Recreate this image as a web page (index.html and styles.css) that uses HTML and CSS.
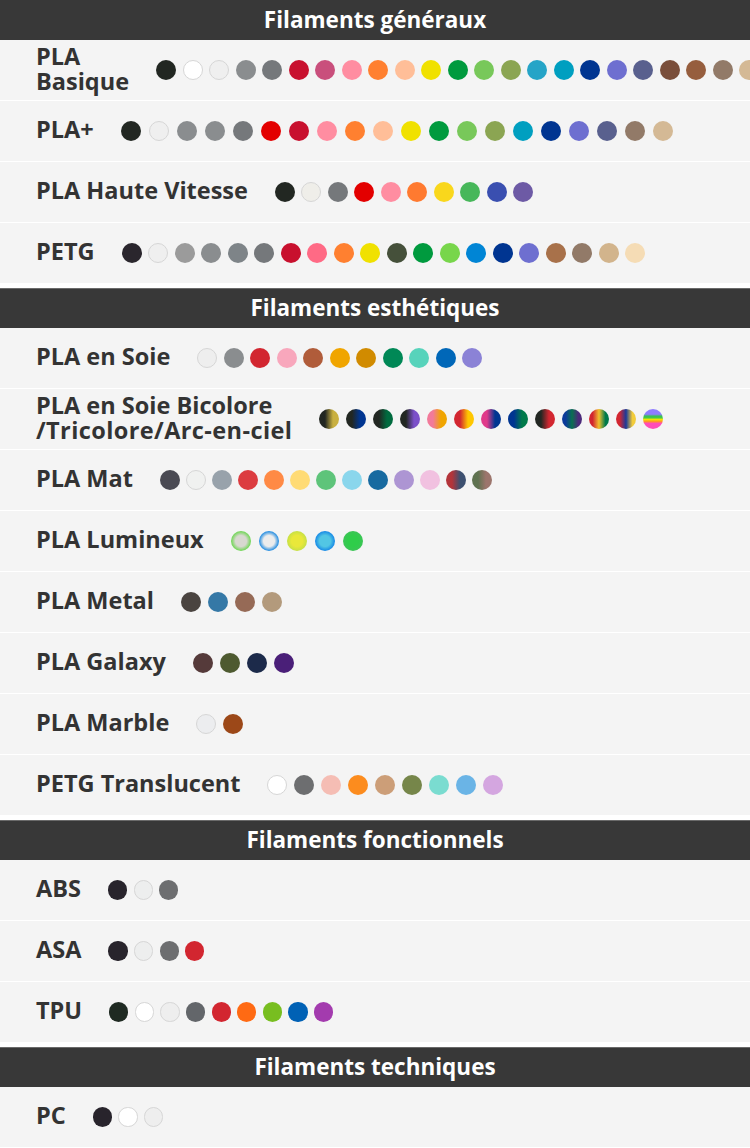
FILE: index.html
```html
<!DOCTYPE html>
<html lang="fr">
<head>
<meta charset="utf-8">
<title>Filaments</title>
<link rel="stylesheet" href="styles.css">
</head>
<body>
<section class="group">
  <h2 class="group-title">Filaments généraux</h2>
  <div class="rows">
    <div class="row">
      <div class="label"><span class="line">PLA</span><span class="line">Basique</span></div>
      <div class="swatches">
        <span class="sw" style="--c:#222722"></span>
        <span class="sw light" style="--c:#ffffff"></span>
        <span class="sw light" style="--c:#efefef"></span>
        <span class="sw" style="--c:#8a8d8f"></span>
        <span class="sw" style="--c:#75787b"></span>
        <span class="sw" style="--c:#c8102e"></span>
        <span class="sw" style="--c:#c94f7c"></span>
        <span class="sw" style="--c:#ff8da1"></span>
        <span class="sw" style="--c:#ff8030"></span>
        <span class="sw" style="--c:#ffbe98"></span>
        <span class="sw" style="--c:#f0e100"></span>
        <span class="sw" style="--c:#009a3e"></span>
        <span class="sw" style="--c:#78c85a"></span>
        <span class="sw" style="--c:#8ba552"></span>
        <span class="sw" style="--c:#25a4c7"></span>
        <span class="sw" style="--c:#009fc0"></span>
        <span class="sw" style="--c:#003591"></span>
        <span class="sw" style="--c:#6e6fd0"></span>
        <span class="sw" style="--c:#59608e"></span>
        <span class="sw" style="--c:#7a4e3a"></span>
        <span class="sw" style="--c:#965e3e"></span>
        <span class="sw" style="--c:#927a68"></span>
        <span class="sw" style="--c:#d4b995"></span>
      </div>
    </div>
    <div class="row">
      <div class="label">PLA+</div>
      <div class="swatches wider">
        <span class="sw" style="--c:#222722"></span>
        <span class="sw light" style="--c:#efefef"></span>
        <span class="sw" style="--c:#8a8d8f"></span>
        <span class="sw" style="--c:#8a8d8f"></span>
        <span class="sw" style="--c:#75787b"></span>
        <span class="sw" style="--c:#e30000"></span>
        <span class="sw" style="--c:#c8102e"></span>
        <span class="sw" style="--c:#ff8da1"></span>
        <span class="sw" style="--c:#ff8030"></span>
        <span class="sw" style="--c:#ffbe98"></span>
        <span class="sw" style="--c:#f0e100"></span>
        <span class="sw" style="--c:#009a3e"></span>
        <span class="sw" style="--c:#78c85a"></span>
        <span class="sw" style="--c:#8ba552"></span>
        <span class="sw" style="--c:#009fc0"></span>
        <span class="sw" style="--c:#003591"></span>
        <span class="sw" style="--c:#6e6fd0"></span>
        <span class="sw" style="--c:#59608e"></span>
        <span class="sw" style="--c:#927a68"></span>
        <span class="sw" style="--c:#d4b995"></span>
      </div>
    </div>
    <div class="row">
      <div class="label">PLA Haute Vitesse</div>
      <div class="swatches">
        <span class="sw" style="--c:#222722"></span>
        <span class="sw light" style="--c:#efeee9"></span>
        <span class="sw" style="--c:#75787b"></span>
        <span class="sw" style="--c:#e30000"></span>
        <span class="sw" style="--c:#ff8da1"></span>
        <span class="sw" style="--c:#ff7a30"></span>
        <span class="sw" style="--c:#f9d71c"></span>
        <span class="sw" style="--c:#47b75a"></span>
        <span class="sw" style="--c:#3a4fb0"></span>
        <span class="sw" style="--c:#6d5aa5"></span>
      </div>
    </div>
    <div class="row">
      <div class="label">PETG</div>
      <div class="swatches">
        <span class="sw" style="--c:#2a262d"></span>
        <span class="sw light" style="--c:#efefef"></span>
        <span class="sw" style="--c:#9b9b9b"></span>
        <span class="sw" style="--c:#8a8d8f"></span>
        <span class="sw" style="--c:#7e8488"></span>
        <span class="sw" style="--c:#75787b"></span>
        <span class="sw" style="--c:#c8102e"></span>
        <span class="sw" style="--c:#ff6a85"></span>
        <span class="sw" style="--c:#ff8030"></span>
        <span class="sw" style="--c:#f0e100"></span>
        <span class="sw" style="--c:#45503a"></span>
        <span class="sw" style="--c:#009a3e"></span>
        <span class="sw" style="--c:#78d64b"></span>
        <span class="sw" style="--c:#0085d5"></span>
        <span class="sw" style="--c:#003591"></span>
        <span class="sw" style="--c:#6e6fd0"></span>
        <span class="sw" style="--c:#a8714a"></span>
        <span class="sw" style="--c:#927a68"></span>
        <span class="sw" style="--c:#d2b48c"></span>
        <span class="sw" style="--c:#f5dcb5"></span>
      </div>
    </div>
  </div>
</section>

<section class="group">
  <h2 class="group-title">Filaments esthétiques</h2>
  <div class="rows">
    <div class="row">
      <div class="label">PLA en Soie</div>
      <div class="swatches">
        <span class="sw light" style="--c:#eeeeee"></span>
        <span class="sw" style="--c:#8a8d8f"></span>
        <span class="sw" style="--c:#d22630"></span>
        <span class="sw" style="--c:#f8a7bc"></span>
        <span class="sw" style="--c:#b05c3a"></span>
        <span class="sw" style="--c:#f0a500"></span>
        <span class="sw" style="--c:#d18b00"></span>
        <span class="sw" style="--c:#008856"></span>
        <span class="sw" style="--c:#57d3bb"></span>
        <span class="sw" style="--c:#0067b8"></span>
        <span class="sw" style="--c:#8b82d6"></span>
      </div>
    </div>
    <div class="row">
      <div class="label"><span class="line">PLA en Soie Bicolore</span><span class="line spaced">/Tricolore/Arc-en-ciel</span></div>
      <div class="swatches wide">
        <span class="sw duo" style="--a:#222722;--b:#c9b040"></span>
        <span class="sw duo" style="--a:#222722;--b:#003591"></span>
        <span class="sw duo" style="--a:#222722;--b:#006b3f"></span>
        <span class="sw duo" style="--a:#222722;--b:#7b4fc9"></span>
        <span class="sw duo" style="--a:#f27a9a;--b:#f0a500"></span>
        <span class="sw duo" style="--a:#d22630;--b:#ffc700"></span>
        <span class="sw duo" style="--a:#e03a8a;--b:#003591"></span>
        <span class="sw duo" style="--a:#003591;--b:#007a4a"></span>
        <span class="sw duo" style="--a:#222722;--b:#d22630"></span>
        <span class="sw trio" style="--a:#0a3a9a;--b:#0a7050;--c:#4b2a7a"></span>
        <span class="sw trio" style="--a:#d22630;--b:#f2c12e;--c:#007a4a"></span>
        <span class="sw trio" style="--a:#d22630;--b:#1a3a9a;--c:#f2cc3a"></span>
        <span class="sw rainbow"></span>
      </div>
    </div>
    <div class="row">
      <div class="label">PLA Mat</div>
      <div class="swatches tight-mat">
        <span class="sw" style="--c:#4a4a53"></span>
        <span class="sw light" style="--c:#f0f1f0"></span>
        <span class="sw" style="--c:#98a2ab"></span>
        <span class="sw" style="--c:#dc3c40"></span>
        <span class="sw" style="--c:#ff8a45"></span>
        <span class="sw" style="--c:#ffdb75"></span>
        <span class="sw" style="--c:#5ec47a"></span>
        <span class="sw" style="--c:#8ad6ec"></span>
        <span class="sw" style="--c:#176aa0"></span>
        <span class="sw" style="--c:#ad95d3"></span>
        <span class="sw" style="--c:#f1c1e0"></span>
        <span class="sw duo" style="--a:#b3343a;--b:#3d5070"></span>
        <span class="sw duo" style="--a:#5f7250;--b:#9c756c"></span>
      </div>
    </div>
    <div class="row">
      <div class="label">PLA Lumineux</div>
      <div class="swatches wider">
        <span class="sw glow" style="--a:#d8d8d0;--b:#6cd650"></span>
        <span class="sw glow" style="--a:#ececec;--b:#1a88e0"></span>
        <span class="sw glow" style="--a:#e9e83a;--b:#c6e046"></span>
        <span class="sw glow" style="--a:#52c6e4;--b:#1588e6"></span>
        <span class="sw glow" style="--a:#2fcd4a;--b:#3cc456"></span>
      </div>
    </div>
    <div class="row">
      <div class="label">PLA Metal</div>
      <div class="swatches wide">
        <span class="sw" style="--c:#4a4440"></span>
        <span class="sw" style="--c:#3578a6"></span>
        <span class="sw" style="--c:#966a56"></span>
        <span class="sw" style="--c:#b39a7c"></span>
      </div>
    </div>
    <div class="row">
      <div class="label">PLA Galaxy</div>
      <div class="swatches wide">
        <span class="sw" style="--c:#553a3a"></span>
        <span class="sw" style="--c:#4e5a30"></span>
        <span class="sw" style="--c:#1c2a4a"></span>
        <span class="sw" style="--c:#4a1f78"></span>
      </div>
    </div>
    <div class="row">
      <div class="label">PLA Marble</div>
      <div class="swatches wide">
        <span class="sw light" style="--c:#ecedef"></span>
        <span class="sw" style="--c:#9c4818"></span>
      </div>
    </div>
    <div class="row">
      <div class="label">PETG Translucent</div>
      <div class="swatches wide">
        <span class="sw light" style="--c:#ffffff"></span>
        <span class="sw" style="--c:#6d6e70"></span>
        <span class="sw" style="--c:#f5bdb4"></span>
        <span class="sw" style="--c:#fc8c1e"></span>
        <span class="sw" style="--c:#cc9e78"></span>
        <span class="sw" style="--c:#76864a"></span>
        <span class="sw" style="--c:#7adcd0"></span>
        <span class="sw" style="--c:#6ab4e6"></span>
        <span class="sw" style="--c:#d4a6e0"></span>
      </div>
    </div>
  </div>
</section>

<section class="group">
  <h2 class="group-title">Filaments fonctionnels</h2>
  <div class="rows">
    <div class="row">
      <div class="label">ABS</div>
      <div class="swatches tight">
        <span class="sw" style="--c:#28242c"></span>
        <span class="sw light" style="--c:#edeeee"></span>
        <span class="sw" style="--c:#6d6e70"></span>
      </div>
    </div>
    <div class="row">
      <div class="label">ASA</div>
      <div class="swatches tight">
        <span class="sw" style="--c:#28242c"></span>
        <span class="sw light" style="--c:#edeeee"></span>
        <span class="sw" style="--c:#6d6e70"></span>
        <span class="sw" style="--c:#d22630"></span>
      </div>
    </div>
    <div class="row">
      <div class="label">TPU</div>
      <div class="swatches tight">
        <span class="sw" style="--c:#1f2a22"></span>
        <span class="sw light" style="--c:#ffffff"></span>
        <span class="sw light" style="--c:#eeeeee"></span>
        <span class="sw" style="--c:#63666a"></span>
        <span class="sw" style="--c:#d22630"></span>
        <span class="sw" style="--c:#ff6a13"></span>
        <span class="sw" style="--c:#78be20"></span>
        <span class="sw" style="--c:#0061b5"></span>
        <span class="sw" style="--c:#a33bae"></span>
      </div>
    </div>
  </div>
</section>

<section class="group">
  <h2 class="group-title">Filaments techniques</h2>
  <div class="rows">
    <div class="row">
      <div class="label">PC</div>
      <div class="swatches tight">
        <span class="sw" style="--c:#28242c"></span>
        <span class="sw light" style="--c:#ffffff"></span>
        <span class="sw light" style="--c:#eeeeee"></span>
      </div>
    </div>
  </div>
</section>
</body>
</html>
```

FILE: styles.css
```css
html, body {
  margin: 0;
  padding: 0;
  background: #ffffff;
  overflow-x: hidden;
}

body {
  width: 750px;
  font-family: "Open Sans", "Noto Sans", sans-serif;
}

.group + .group {
  margin-top: 5px;
}

.group-title {
  margin: 0;
  height: 40px;
  box-sizing: border-box;
  background: #383838;
  color: #ffffff;
  font-size: 22.5px;
  font-weight: 700;
  line-height: 1;
  display: flex;
  align-items: center;
  justify-content: center;
}

.group + .group .group-title {
  border-top: 1px solid #6a6a6a;
}

.rows {
  display: flex;
  flex-direction: column;
  gap: 1px;
}

.row {
  height: 60px;
  background: #f4f4f4;
  display: flex;
  align-items: center;
  gap: 27px;
  padding-left: 36px;
  overflow: hidden;
}

.label {
  flex: none;
  display: flex;
  flex-direction: column;
  font-size: 23.5px;
  font-weight: 700;
  line-height: 24.5px;
  padding-bottom: 3px;
  color: #333333;
  white-space: nowrap;
}

.label .line {
  display: block;
  height: 24.5px;
}

.label .spaced {
  letter-spacing: 0.4px;
}

.swatches {
  flex: none;
  display: flex;
  align-items: center;
  gap: 6.5px;
}

.swatches.wide { gap: 7px; }
.swatches.wider { gap: 7.5px; }
.swatches.tight-mat { gap: 6px; }
.swatches.tight { gap: 6.3px; }

.swatches.wider .sw {
  width: 20.5px;
  height: 20.5px;
}

.swatches.tight .sw {
  width: 19.3px;
  height: 19.3px;
}

.sw {
  flex: none;
  display: block;
  width: 20px;
  height: 20px;
  border-radius: 50%;
  box-sizing: border-box;
  background: var(--c);
}

.sw.light {
  border: 1px solid #d6d6d6;
}

.sw.duo {
  background: linear-gradient(90deg, var(--a) 30%, var(--b) 70%);
}

.sw.trio {
  background: linear-gradient(90deg, var(--a) 18%, var(--b) 50%, var(--c) 82%);
}

.sw.glow {
  background: radial-gradient(circle closest-side, var(--a) 55%, var(--b) 100%);
}

.sw.rainbow {
  background: linear-gradient(180deg,
    #8e7dff 0%, #8e7dff 26%,
    #3ac24f 36%, #44c84a 44%,
    #f3e600 52%, #ff9a20 62%,
    #ff4db8 72%, #ff4db8 100%);
}
```
